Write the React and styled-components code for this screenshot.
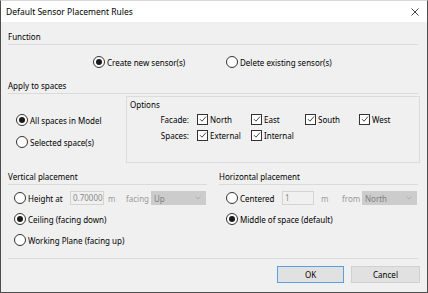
import React from "react";
import styled, { createGlobalStyle } from "styled-components";

const GlobalStyle = createGlobalStyle`
  html, body {
    margin: 0;
    padding: 0;
    background: #f0f0f0;
  }
  body {
    font-family: "Noto Sans", "Open Sans", sans-serif;
    font-size: 8px;
    color: #000;
  }
`;

const Window = styled.div`
  width: 428px;
  height: 293px;
  box-sizing: border-box;
  border: 1px solid #4d4d4d;
  border-top-color: #d8d8d8;
  display: flex;
  flex-direction: column;
  background: #f0f0f0;
  overflow: hidden;
`;

const TitleBar = styled.div`
  height: 21px;
  background: #fff;
  display: flex;
  align-items: center;
  justify-content: space-between;
  padding: 0 8px 0 5px;
  font-size: 8.5px;
`;

const CloseButton = styled.span`
  display: flex;
  align-items: center;
  color: #222;
`;

const Body = styled.div`
  flex: 1;
  padding: 0 7px;
  display: flex;
  flex-direction: column;
`;

const SectionTitle = styled.div`
  height: 14px;
  line-height: 14px;
  border-bottom: 1px solid #dadada;
  margin-top: ${(p) => p.$top || 0}px;
  margin-right: ${(p) => p.$right || 0}px;
`;

const FunctionRow = styled.div`
  display: grid;
  grid-template-columns: 85px 133px auto;
  margin-top: 9px;
  height: 16px;
  align-items: center;
`;

const RadioLabel = styled.label`
  display: flex;
  align-items: center;
  gap: 2px;
  height: 16px;
  white-space: nowrap;
  width: ${(p) => (p.$width ? `${p.$width}px` : "auto")};
  flex: none;
`;

const RadioCircle = styled.span`
  width: 10px;
  height: 10px;
  border-radius: 50%;
  border: 1px solid #333;
  background: #fff;
  display: flex;
  align-items: center;
  justify-content: center;
  flex: none;
  &::after {
    content: "";
    width: 6px;
    height: 6px;
    border-radius: 50%;
    background: ${(p) => (p.$checked ? "#1a1a1a" : "transparent")};
  }
`;

const ApplyGrid = styled.div`
  display: grid;
  grid-template-columns: 118px 294px;
  margin-top: 2px;
`;

const LeftRadios = styled.div`
  display: flex;
  flex-direction: column;
  gap: 6px;
  padding: 16px 0 0 8px;
`;

const OptionsBox = styled.div`
  height: 67px;
  box-sizing: border-box;
  border: 1px solid #dcdcdc;
  padding-top: 1px;
`;

const OptionsTitle = styled.div`
  height: 14px;
  line-height: 14px;
  padding-left: 3px;
`;

const OptionsGrid = styled.div`
  display: grid;
  grid-template-columns: 70px repeat(4, 54px);
  grid-auto-rows: 14px;
  row-gap: 2px;
  align-items: center;
`;

const FieldLabel = styled.span`
  text-align: right;
  padding-right: 8px;
  white-space: nowrap;
`;

const CheckLabel = styled.label`
  display: flex;
  align-items: center;
  gap: 2px;
  white-space: nowrap;
`;

const CheckBox = styled.span`
  width: 9px;
  height: 9px;
  border: 1px solid #333;
  background: #fff;
  display: flex;
  align-items: center;
  justify-content: center;
  flex: none;
`;

const PlacementGrid = styled.div`
  display: grid;
  grid-template-columns: 199px 201px;
  column-gap: 12px;
  margin-top: 7px;
`;

const PlacementCol = styled.div`
  display: flex;
  flex-direction: column;
`;

const Rows = styled.div`
  display: flex;
  flex-direction: column;
  gap: 5px;
  margin-top: 5px;
  padding-left: ${(p) => p.$indent}px;
`;

const InlineRow = styled.div`
  display: flex;
  align-items: center;
  height: 16px;
`;

const TextBox = styled.span`
  width: ${(p) => p.$width}px;
  height: 14px;
  box-sizing: border-box;
  border: 1px solid #d4d4d4;
  background: #f0f0f0;
  color: #8a8a8a;
  padding-left: 2px;
  line-height: 12px;
  overflow: hidden;
  white-space: nowrap;
  flex: none;
`;

const Dim = styled.span`
  color: #9a9a9a;
  width: ${(p) => p.$width}px;
  padding-left: ${(p) => p.$pad || 0}px;
  box-sizing: border-box;
  flex: none;
  white-space: nowrap;
`;

const Select = styled.span`
  width: 55px;
  height: 14px;
  box-sizing: border-box;
  background: #cccccc;
  border: 1px solid #cccccc;
  color: #7f7f7f;
  display: flex;
  align-items: center;
  justify-content: space-between;
  padding: 0 4px 0 2px;
  flex: none;
`;

const Footer = styled.div`
  margin-top: auto;
  border-top: 1px solid #dadada;
  margin-right: 2px;
  display: flex;
  justify-content: flex-end;
  gap: 7px;
  padding: 7px 0 9px;
`;

const Button = styled.button`
  width: ${(p) => p.$width}px;
  height: 17px;
  box-sizing: border-box;
  font: inherit;
  background: #e1e1e1;
  border: 1px solid ${(p) => (p.$primary ? "#5aa0e0" : "#d0d0d0")};
  color: #000;
  padding: 0;
  margin-right: ${(p) => p.$mr || 0}px;
`;

const Radio = ({ checked, children, width }) => (
  <RadioLabel $width={width}>
    <RadioCircle $checked={checked} />
    {children}
  </RadioLabel>
);

const Check = ({ children }) => (
  <CheckLabel>
    <CheckBox>
      <svg width="8" height="8" viewBox="0 0 8 8">
        <path d="M1 4.2 L3 6.2 L7 1.6" fill="none" stroke="#333" strokeWidth="0.9" />
      </svg>
    </CheckBox>
    {children}
  </CheckLabel>
);

const Chevron = () => (
  <svg width="6" height="4" viewBox="0 0 6 4">
    <path d="M0.5 0.5 L3 3 L5.5 0.5" fill="none" stroke="#a8a8a8" strokeWidth="0.8" />
  </svg>
);

export default function App() {
  return (
    <>
      <GlobalStyle />
      <Window>
        <TitleBar>
          <span>Default Sensor Placement Rules</span>
          <CloseButton>
            <svg width="8" height="8" viewBox="0 0 8 8">
              <path d="M0.5 0.5 L7.5 7.5 M7.5 0.5 L0.5 7.5" stroke="#333" strokeWidth="0.9" />
            </svg>
          </CloseButton>
        </TitleBar>
        <Body>
          <SectionTitle $top={8} $right={2}>Function</SectionTitle>
          <FunctionRow>
            <span />
            <Radio checked>Create new sensor(s)</Radio>
            <Radio>Delete existing sensor(s)</Radio>
          </FunctionRow>

          <SectionTitle $top={9} $right={2}>Apply to spaces</SectionTitle>
          <ApplyGrid>
            <LeftRadios>
              <Radio checked>All spaces in Model</Radio>
              <Radio>Selected space(s)</Radio>
            </LeftRadios>
            <OptionsBox>
              <OptionsTitle>Options</OptionsTitle>
              <OptionsGrid>
                <FieldLabel>Facade:</FieldLabel>
                <Check>North</Check>
                <Check>East</Check>
                <Check>South</Check>
                <Check>West</Check>
                <FieldLabel>Spaces:</FieldLabel>
                <Check>External</Check>
                <Check>Internal</Check>
              </OptionsGrid>
            </OptionsBox>
          </ApplyGrid>

          <PlacementGrid>
            <PlacementCol>
              <SectionTitle>Vertical placement</SectionTitle>
              <Rows $indent={6}>
                <InlineRow>
                  <Radio width={56}>Height at</Radio>
                  <TextBox $width={34}>0.70000</TextBox>
                  <Dim $width={22} $pad={4}>m</Dim>
                  <Dim $width={25}>facing</Dim>
                  <Select>
                    <span>Up</span>
                    <Chevron />
                  </Select>
                </InlineRow>
                <Radio checked>Ceiling (facing down)</Radio>
                <Radio>Working Plane (facing up)</Radio>
              </Rows>
            </PlacementCol>
            <PlacementCol>
              <SectionTitle $right={2}>Horizontal placement</SectionTitle>
              <Rows $indent={7}>
                <InlineRow>
                  <Radio width={56}>Centered</Radio>
                  <TextBox $width={32}>1</TextBox>
                  <Dim $width={28} $pad={7}>m</Dim>
                  <Dim $width={20}>from</Dim>
                  <Select>
                    <span>North</span>
                    <Chevron />
                  </Select>
                </InlineRow>
                <Radio checked>Middle of space (default)</Radio>
              </Rows>
            </PlacementCol>
          </PlacementGrid>

          <Footer>
            <Button $primary $width={67}>OK</Button>
            <Button $width={69} $mr={-2}>Cancel</Button>
          </Footer>
        </Body>
      </Window>
    </>
  );
}
